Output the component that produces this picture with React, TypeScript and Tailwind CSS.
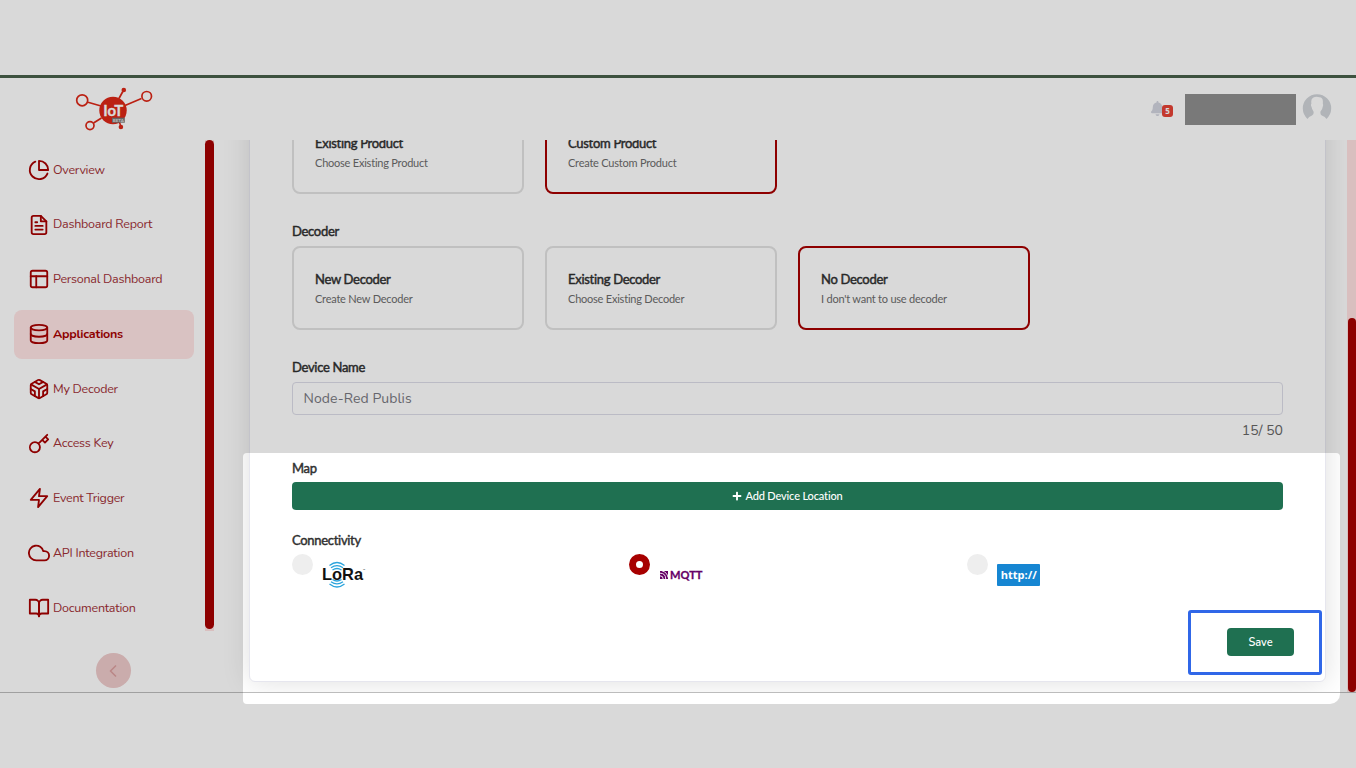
import type { ReactNode } from "react";
import {
  FiPieChart, FiFileText, FiLayout, FiDatabase, FiCodesandbox, FiKey,
  FiZap, FiCloud, FiBookOpen, FiChevronLeft,
} from "react-icons/fi";
import { FaBell, FaPlus } from "react-icons/fa";

const NAV = [
  { label: "Overview", Icon: FiPieChart },
  { label: "Dashboard Report", Icon: FiFileText },
  { label: "Personal Dashboard", Icon: FiLayout },
  { label: "Applications", Icon: FiDatabase, active: true },
  { label: "My Decoder", Icon: FiCodesandbox },
  { label: "Access Key", Icon: FiKey },
  { label: "Event Trigger", Icon: FiZap },
  { label: "API Integration", Icon: FiCloud },
  { label: "Documentation", Icon: FiBookOpen },
];

function IotLogo() {
  return (
    <svg width="80" height="46" viewBox="74 86 80 46" className="ml-[74px] mt-[8px] shrink-0">
      <g fill="none" stroke="#dc2717" strokeWidth="1.7">
        <path d="M88 102.2 L101 106 M125 105.5 L141.500 98.500 M119 98.500 L122.800 91.500 M93.500 123 L101.500 118 M119 121.500 L120.500 125" />
        <circle cx="82.200" cy="100.300" r="5.500" />
        <circle cx="146.700" cy="96.300" r="4.800" />
        <circle cx="90" cy="125.600" r="4" />
      </g>
      <circle cx="123.800" cy="90" r="2.300" fill="#dc2717" />
      <circle cx="120.900" cy="127" r="2.300" fill="#dc2717" />
      <circle cx="113" cy="110.500" r="13.700" fill="#dc2717" />
      <text x="103.300" y="116.200" textLength="20" lengthAdjust="spacingAndGlyphs" fontFamily="Lato, sans-serif" fontWeight="700" fontSize="16" fill="#fff" stroke="#fff" strokeWidth="0.300">IoT</text>
      <rect x="112" y="117.700" width="12.800" height="5" fill="#777" />
      <text x="112.800" y="121.900" textLength="11" fontFamily="Lato, sans-serif" fontWeight="700" fontSize="4.500" fill="#ddd">BETA</text>
    </svg>
  );
}

function Header() {
  return (
    <header className="flex h-[62px] shrink-0 items-start">
      <IotLogo />
      <div className="ml-auto flex items-start">
        <div className="relative mt-[23px] h-4 w-[35px]">
          <FaBell size={15} color="#d2d4df" />
          <span className="absolute top-[4px] left-[12px] flex h-3 w-[11px] items-center justify-center rounded-[3px] bg-[#e64236] font-['Open_Sans',sans-serif] text-[8px] font-bold text-white">5</span>
        </div>
        <div className="mt-[16px] h-[31px] w-[111px] bg-[#8f8f8f]" />
        <svg width="30" height="29" viewBox="0 0 30 29" className="mt-[15px] mr-[24px] ml-[6px]">
          <path fill="#d0d4d9" fillRule="evenodd" d="M5.500 25.900 A14.200 14.200 0 1 1 24.500 25.900 Q23.500 24 19.800 22.500 Q18 21.500 18.500 18.500 Q20.500 16.500 20.800 13.500 Q21.500 12 20.800 10.500 Q21.500 4.500 17.500 4.300 Q14 3 11 4.800 Q8.700 6 9.400 10.500 Q8.500 12 9.500 13.800 Q10 16.700 11.500 18.500 Q12.200 21.500 10 22.500 Q6.500 24 5.500 25.900 Z" />
        </svg>
      </div>
    </header>
  );
}

function Sidebar() {
  return (
    <aside className="flex w-[214px] shrink-0 flex-col">
      <div className="flex h-[491px] justify-between">
        <nav className="ml-[14px] flex w-[180px] flex-col gap-[5.75px] pt-[5.4px]">
          {NAV.map(({ label, Icon, active }) => (
            <a key={label} className={"flex h-[49px] shrink-0 items-center rounded-lg pl-[14px] text-[#a70000] " + (active ? "bg-[#ffe4e4]" : "")}>
              <Icon size={22} />
              <span className={"ml-[3px] font-['Nunito',Lato,sans-serif] text-[12.5px] tracking-[-0.25px] whitespace-nowrap " + (active ? "font-bold text-[#a70000]" : "text-[#a22f36]")}>{label}</span>
            </a>
          ))}
        </nav>
        <div className="h-full w-[9px] bg-[#ffe1e1]">
          <div className="h-[489px] rounded-full bg-[#a60000]" />
        </div>
      </div>
      <button className="mt-[22px] ml-[96px] flex size-[35px] items-center justify-center rounded-full bg-[#eecaca] pr-[2px] text-[#dba0a0]">
        <FiChevronLeft size={20} />
      </button>
    </aside>
  );
}

function Option({ title, text, selected = false }: { title: string; text: string; selected?: boolean }) {
  return (
    <div className={"h-[84px] w-[232px] shrink-0 rounded-lg border-2 px-[21px] pt-[21px] " + (selected ? "border-[#a70000]" : "border-[#e2e2e2]")}>
      <h3 className="text-[13px] leading-5 font-normal tracking-[-0.3px] text-[#303030] [-webkit-text-stroke:0.45px_#303030]">{title}</h3>
      <p className="text-[11px] leading-5 tracking-[-0.22px] text-[#6c6c6c]">{text}</p>
    </div>
  );
}

function Label({ children }: { children: ReactNode }) {
  return <h2 className="h-5 text-[13px] leading-5 font-normal tracking-[-0.3px] text-[#303030] [-webkit-text-stroke:0.45px_#303030]">{children}</h2>;
}

function Radio({ on = false }: { on?: boolean }) {
  return <span className={"mt-[1.5px] size-[21px] shrink-0 rounded-full " + (on ? "border-[7px] border-[#a70000] bg-white" : "bg-[#eeeeee]")} />;
}

function LoraLogo() {
  return (
    <svg width="46" height="28" viewBox="0 0 46 28" className="mt-[8px] ml-[9px]">
      <g fill="none" stroke="#2ba4dc" strokeWidth="1.300">
        <path d="M7.500 4.500 Q15 -1.500 22.500 4.500 M9 6.800 Q15 2.300 21 6.800 M10.500 9 Q15 6 19.500 9" />
        <path d="M7.500 23 Q15 29 22.500 23 M9 20.700 Q15 25.200 21 20.700 M10.500 18.500 Q15 21.500 19.500 18.500" />
      </g>
      <text x="0" y="18.500" textLength="41" lengthAdjust="spacingAndGlyphs" fontFamily="'Liberation Sans', sans-serif" fontWeight="700" fontSize="17" fill="#111">LoRa</text>
      <text x="41" y="9.500" fontFamily="Lato, sans-serif" fontSize="3" fill="#444">™</text>
    </svg>
  );
}

function MqttLogo() {
  return (
    <svg width="48" height="20" viewBox="0 -3 48 20" className="mt-[13px] ml-[8.500px]">
      <path d="M1 2 H9 V10 H1 Z" fill="#660066" />
      <path d="M1 6.800 Q4.200 6.800 4.200 10 M1 4.200 Q6.700 4.200 6.700 10 M3 1.800 Q8.500 3.500 9 8.500" fill="none" stroke="#fff" strokeWidth="0.900" />
      <text x="11" y="10.300" textLength="32.500" lengthAdjust="spacingAndGlyphs" fontFamily="Lato, sans-serif" fontWeight="700" fontSize="11.500" fill="#660066" stroke="#660066" strokeWidth="0.300">MQTT</text>
    </svg>
  );
}

function DeviceForm() {
  return (
    <section className="-mt-[50px] flex h-[592px] w-[1077px] shrink-0 flex-col rounded-md border border-[#e6e6ee] bg-white px-[42px] shadow-[0_0_28px_rgba(0,0,0,0.13)]">
      <div className="mt-[19px] flex shrink-0 gap-[21px]">
        <Option title="Existing Product" text="Choose Existing Product" />
        <Option title="Custom Product" text="Create Custom Product" selected />
      </div>
      <div className="mt-[27px]"><Label>Decoder</Label></div>
      <div className="mt-[5px] flex shrink-0 gap-[21px]">
        <Option title="New Decoder" text="Create New Decoder" />
        <Option title="Existing Decoder" text="Choose Existing Decoder" />
        <Option title="No Decoder" text="I don't want to use decoder" selected />
      </div>
      <div className="mt-[27px]"><Label>Device Name</Label></div>
      <div className="mt-[5px] flex h-[33px] shrink-0 items-center rounded border border-[#dcdce8] px-[10.5px] font-['Nunito',Lato,sans-serif] text-[14px] tracking-[0.07px] text-[#777780]">Node-Red Publis</div>
      <div className="mt-[6px] h-5 text-right font-['Nunito',Lato,sans-serif] text-[14px] leading-5 text-[#666]">15/ 50</div>
      <div className="mt-[17px]"><Label>Map</Label></div>
      <button className="mt-[4.400px] mb-[0.600px] flex h-[28px] shrink-0 items-center justify-center gap-[3px] rounded bg-[#1f7051] text-[11px] font-medium tracking-[-0.15px] text-white"><FaPlus size={10} />Add Device Location</button>
      <div className="mt-[19px]"><Label>Connectivity</Label></div>
      <div className="mt-[3px] grid h-[40px] shrink-0 grid-cols-[337.400px_337.400px_1fr]">
        <div className="flex items-start"><Radio /><LoraLogo /></div>
        <div className="flex items-start"><Radio on /><MqttLogo /></div>
        <div className="flex items-start"><Radio /><span className="mt-[11px] ml-[9.500px] flex h-[22px] w-[43px] items-center justify-center rounded-[1px] bg-[#1686d2] font-['Open_Sans',sans-serif] text-[11px] font-bold text-white">http://</span></div>
      </div>
      <button className="mt-[35px] -mr-[11px] h-[28px] w-[67px] shrink-0 self-end rounded bg-[#1f7051] pt-[2px] font-['Nunito',Lato,sans-serif] text-[11px] font-semibold text-white">Save</button>
    </section>
  );
}

export default function App() {
  return (
    <div className="relative flex h-[768px] w-[1356px] flex-col overflow-hidden bg-white font-['Lato',sans-serif]">
      <div className="h-[78px] shrink-0 border-b-[3px] border-[#48614b]" />
      <Header />
      <div className="flex h-[552px] shrink-0 overflow-hidden">
        <Sidebar />
        <main className="flex flex-1 overflow-hidden pl-[35px]"><DeviceForm /></main>
        <div className="flex h-full w-[9px] flex-col justify-end bg-[#ffe1e1]">
          <div className="ml-px h-[374px] rounded-full bg-[#a60000]" />
        </div>
      </div>
      <div className="h-px shrink-0 bg-[#bcbcbc]" />
      <div className="absolute top-[453px] left-[243px] h-[251px] w-[1097px] rounded-[4px] rounded-br-[10px] shadow-[0_0_0_1500px_rgba(0,0,0,0.15)]" />
      <div className="absolute top-[610px] left-[1188px] h-[65px] w-[134px] rounded-[3px] border-[3px] border-[#3067e8]" />
    </div>
  );
}
